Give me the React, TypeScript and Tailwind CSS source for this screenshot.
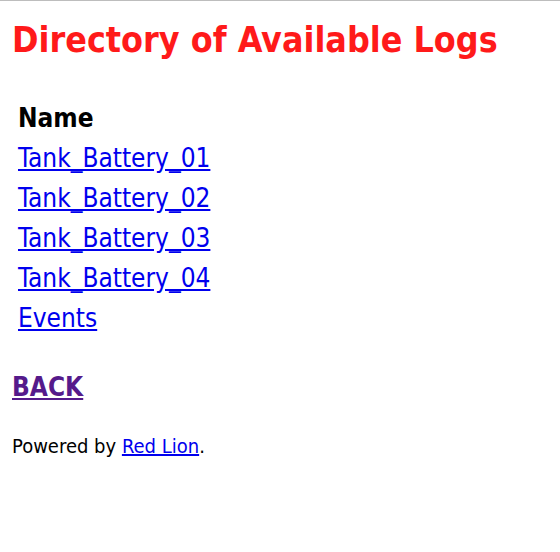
const logs = ["Tank_Battery_01", "Tank_Battery_02", "Tank_Battery_03", "Tank_Battery_04", "Events"];

export default function App() {
  return (
    <div className="min-h-[552px] border-t border-[#bdbdbd] bg-white px-3 font-['DejaVu_Sans_Condensed',sans-serif] text-black">
      <h1 className="mt-[19px] text-[35.5px] font-bold leading-[40px] text-[#ff1a1a]">Directory of Available Logs</h1>
      <table className="mt-[37px] border-separate border-spacing-[2px]">
        <thead>
          <tr>
            <th className="px-[4px] text-left text-[26px] font-bold leading-[38px]">Name</th>
          </tr>
        </thead>
        <tbody>
          {logs.map((name) => (
            <tr key={name}>
              <td className="px-[4px] text-[26px] leading-[38px]">
                <a href="#" className="text-[#0000ee] underline">{name}</a>
              </td>
            </tr>
          ))}
        </tbody>
      </table>
      <p className="mt-[33px] text-[26px] font-bold leading-[30px]">
        <a href="#" className="text-[#551a8b] underline">BACK</a>
      </p>
      <p className="mt-[32px] text-[20px] leading-[24px]">
        Powered by <a href="#" className="text-[#0000ee] underline">Red Lion</a>.
      </p>
    </div>
  );
}
